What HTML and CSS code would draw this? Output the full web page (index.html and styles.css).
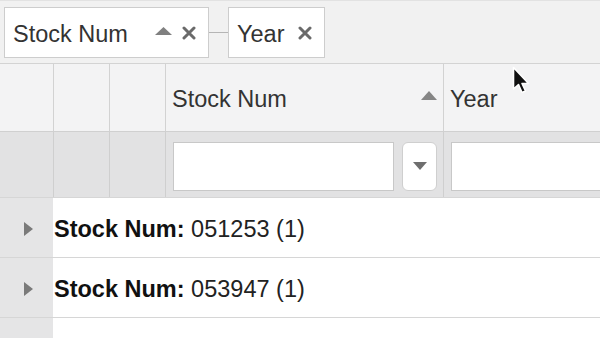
FILE: index.html
```html
<!DOCTYPE html>
<html>
<head>
<meta charset="utf-8">
<link rel="stylesheet" href="styles.css">
</head>
<body>
<div class="grid">
  <div class="group-bar">
    <div class="chip chip-stock">
      <span class="chip-label">Stock Num</span>
      <span class="chip-icons">
        <svg class="sort-up" width="17" height="8" viewBox="0 0 17 8"><polygon points="0,8 8.5,0 17,8" fill="#808080"/></svg>
        <svg class="close" width="14" height="14" viewBox="0 0 14 14"><path d="M2 2 L12 12 M12 2 L2 12" stroke="#6a6a6a" stroke-width="3" stroke-linecap="round"/></svg>
      </span>
    </div>
    <div class="connector"></div>
    <div class="chip chip-year">
      <span class="chip-label">Year</span>
      <span class="chip-icons">
        <svg class="close" width="14" height="14" viewBox="0 0 14 14"><path d="M2 2 L12 12 M12 2 L2 12" stroke="#6a6a6a" stroke-width="3" stroke-linecap="round"/></svg>
      </span>
    </div>
  </div>

  <div class="row header-row">
    <div class="cell c1"></div>
    <div class="cell c2"></div>
    <div class="cell c3"></div>
    <div class="cell c4 head">
      <span>Stock Num</span>
      <svg width="16" height="9" viewBox="0 0 16 9"><polygon points="0,9 8,0 16,9" fill="#858585"/></svg>
    </div>
    <div class="cell c5 head"><span>Year</span></div>
  </div>

  <div class="row filter-row">
    <div class="cell c1"></div>
    <div class="cell c2"></div>
    <div class="cell c3"></div>
    <div class="cell c4 filter">
      <div class="input"></div>
      <div class="drop">
        <svg width="14" height="8" viewBox="0 0 14 8"><polygon points="0,0 14,0 7,8" fill="#6e6e6e"/></svg>
      </div>
    </div>
    <div class="cell c5 filter">
      <div class="input input-wide"></div>
    </div>
  </div>

  <div class="data-row">
    <div class="gutter"><svg width="9" height="14" viewBox="0 0 9 14"><polygon points="0,0 9,7 0,14" fill="#7a7a7a"/></svg></div>
    <div class="group-text"><b>Stock Num:</b> 051253 (1)</div>
  </div>
  <div class="data-row">
    <div class="gutter"><svg width="9" height="14" viewBox="0 0 9 14"><polygon points="0,0 9,7 0,14" fill="#7a7a7a"/></svg></div>
    <div class="group-text"><b>Stock Num:</b> 053947 (1)</div>
  </div>
  <div class="data-row">
    <div class="gutter"><svg width="9" height="14" viewBox="0 0 9 14"><polygon points="0,0 9,7 0,14" fill="#7a7a7a"/></svg></div>
    <div class="group-text"><b>Stock Num:</b> 053988 (1)</div>
  </div>

  <svg class="cursor" width="20" height="30" viewBox="0 0 20 30">
    <path d="M1.5 1.5 L1.5 23 L6.5 18.5 L10 26.5 L13.5 25 L10 17.5 L16.5 17.5 Z" fill="#111" stroke="#fff" stroke-width="1.6" stroke-linejoin="round"/>
  </svg>
</div>
</body>
</html>
```

FILE: styles.css
```css
html, body {
  margin: 0;
  padding: 0;
  background: #ffffff;
}

body {
  width: 600px;
  height: 338px;
  overflow: hidden;
  font-family: "Liberation Sans", Arial, sans-serif;
  color: #2a2a2a;
}

.grid {
  position: relative;
  width: 600px;
  height: 338px;
  overflow: hidden;
}

.group-bar {
  height: 64px;
  box-sizing: border-box;
  background: #f1f1f1;
  border-top: 1px solid #e2e2e2;
  border-bottom: 1px solid #d3d3d3;
  display: flex;
  align-items: center;
  padding-left: 4px;
  padding-top: 1px;
}

.chip {
  height: 51px;
  box-sizing: border-box;
  background: #ffffff;
  border: 1px solid #cdcdcd;
  display: flex;
  align-items: center;
  padding-left: 8px;
  padding-top: 3px;
  font-size: 23.5px;
  color: #333;
  flex-shrink: 0;
}

.chip-stock {
  width: 205px;
}

.chip-year {
  width: 97px;
}

.chip-label {
  flex: 1;
}

.chip-icons {
  display: flex;
  align-items: center;
  padding-right: 12px;
  gap: 10px;
  margin-top: -3px;
}

.chip-icons .sort-up {
  margin-top: -4px;
}

.connector {
  width: 19px;
  height: 1px;
  background: #b5b5b5;
  flex-shrink: 0;
}

.row {
  display: flex;
  box-sizing: border-box;
}

.cell {
  box-sizing: border-box;
  border-right: 1px solid #d2d2d2;
  height: 100%;
  flex-shrink: 0;
}

.c1 { width: 54px; }
.c2 { width: 56px; }
.c3 { width: 56px; }
.c4 { width: 278px; }
.c5 { flex: 1 1 auto; border-right: none; min-width: 0; }

.header-row {
  height: 68px;
  background: #f3f3f4;
  border-bottom: 1px solid #d0d0d0;
}

.head {
  display: flex;
  align-items: center;
  justify-content: space-between;
  padding: 3px 6px 0 6px;
  font-size: 23.5px;
  color: #333;
}

.head svg {
  margin-top: -7px;
}

.filter-row {
  height: 66px;
  background: #e2e2e3;
  border-bottom: 1px solid #d6d6d6;
}

.filter-row .cell {
  border-right-color: #cfcfcf;
}

.filter {
  display: flex;
  align-items: center;
  padding-left: 7px;
  padding-top: 3px;
  gap: 8px;
}

.input {
  width: 221px;
  height: 49px;
  box-sizing: border-box;
  background: #ffffff;
  border: 1px solid #c8c8c8;
  flex-shrink: 0;
}

.input-wide {
  width: 160px;
  border-right: none;
}

.drop {
  width: 35px;
  height: 49px;
  box-sizing: border-box;
  background: #ffffff;
  border: 1px solid #cfcfcf;
  border-radius: 6px;
  display: flex;
  align-items: center;
  justify-content: center;
  flex-shrink: 0;
}

.data-row {
  height: 60px;
  box-sizing: border-box;
  border-bottom: 1px solid #d6d6d6;
  display: flex;
  background: #ffffff;
}

.gutter {
  width: 53px;
  flex-shrink: 0;
  background: #e5e5e6;
  display: flex;
  align-items: center;
  padding-left: 24px;
  padding-top: 2px;
  box-sizing: border-box;
}

.group-text {
  display: flex;
  align-items: center;
  padding-left: 1px;
  padding-top: 4px;
  font-size: 23.5px;
  color: #222;
  white-space: pre;
}

.group-text b {
  color: #111;
}

.cursor {
  position: absolute;
  left: 512px;
  top: 66px;
}
```
